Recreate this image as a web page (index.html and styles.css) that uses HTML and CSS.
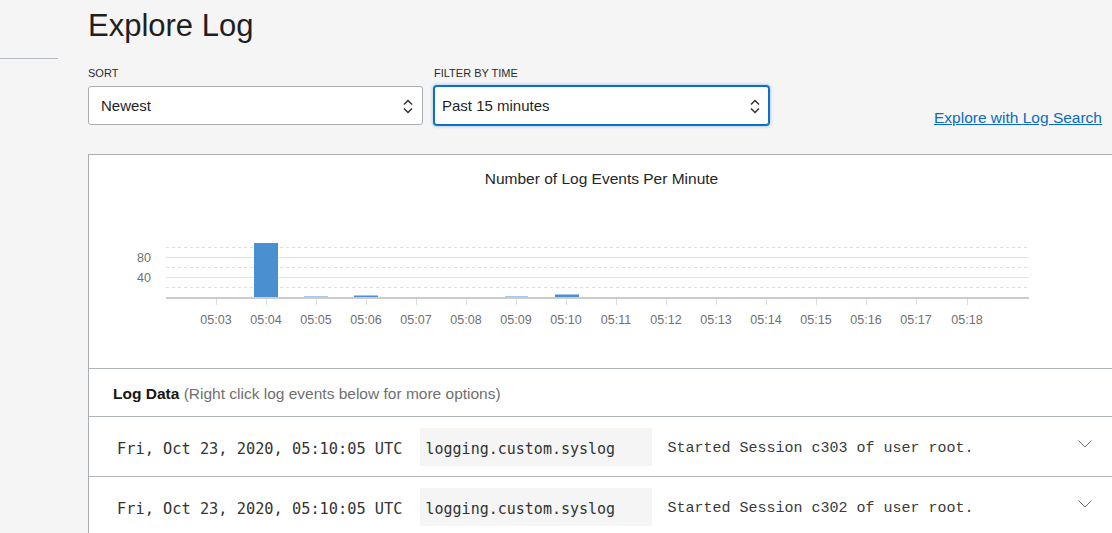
FILE: index.html
```html
<!DOCTYPE html>
<html lang="en">
<head>
<meta charset="utf-8">
<title>Explore Log</title>
<link rel="stylesheet" href="styles.css">
</head>
<body>
<div class="layout">
  <aside class="sidebar"><div class="sidebar-top"></div></aside>
  <main class="content">
    <h1 class="title">Explore Log</h1>
    <div class="controls">
      <div class="field">
        <label class="field-label">SORT</label>
        <div class="select">
          <span>Newest</span>
          <svg class="select-icon" width="10" height="16" viewBox="0 0 10 16"><path d="M1 6.5 L5 2.5 L9 6.5 M1 10.5 L5 14.5 L9 10.5" fill="none" stroke="#333" stroke-width="1.5"/></svg>
        </div>
      </div>
      <div class="field">
        <label class="field-label">FILTER BY TIME</label>
        <div class="select select-focused">
          <span>Past 15 minutes</span>
          <svg class="select-icon" width="10" height="16" viewBox="0 0 10 16"><path d="M1 6.5 L5 2.5 L9 6.5 M1 10.5 L5 14.5 L9 10.5" fill="none" stroke="#333" stroke-width="1.5"/></svg>
        </div>
      </div>
      <a class="search-link" href="#">Explore with Log Search</a>
    </div>
    <section class="panel">
      <div class="chart">
        <div class="chart-title">Number of Log Events Per Minute</div>
        <svg class="chart-svg" width="1025" height="181" viewBox="89 187 1025 181">
          <g class="grid-dashed" stroke="#dedede" stroke-width="1" stroke-dasharray="3 3">
            <line x1="166" y1="247.5" x2="1029" y2="247.5"/>
            <line x1="166" y1="267.5" x2="1029" y2="267.5"/>
            <line x1="166" y1="287.5" x2="1029" y2="287.5"/>
          </g>
          <g stroke="#e3e3e3" stroke-width="1">
            <line x1="166" y1="257.5" x2="1029" y2="257.5"/>
            <line x1="166" y1="277.5" x2="1029" y2="277.5"/>
          </g>
          <g stroke="#dcdcdc" stroke-width="1">
            <line x1="216.5" y1="299" x2="216.5" y2="305"/>
            <line x1="266.5" y1="299" x2="266.5" y2="305"/>
            <line x1="316.5" y1="299" x2="316.5" y2="305"/>
            <line x1="366.5" y1="299" x2="366.5" y2="305"/>
            <line x1="416.5" y1="299" x2="416.5" y2="305"/>
            <line x1="466.5" y1="299" x2="466.5" y2="305"/>
            <line x1="516.5" y1="299" x2="516.5" y2="305"/>
            <line x1="566.5" y1="299" x2="566.5" y2="305"/>
            <line x1="616.5" y1="299" x2="616.5" y2="305"/>
            <line x1="666.5" y1="299" x2="666.5" y2="305"/>
            <line x1="716.5" y1="299" x2="716.5" y2="305"/>
            <line x1="766.5" y1="299" x2="766.5" y2="305"/>
            <line x1="816.5" y1="299" x2="816.5" y2="305"/>
            <line x1="866.5" y1="299" x2="866.5" y2="305"/>
            <line x1="916.5" y1="299" x2="916.5" y2="305"/>
            <line x1="967.5" y1="299" x2="967.5" y2="305"/>
          </g>
          <g fill="#4a8fd0">
            <rect x="254" y="243" width="24" height="54"/>
            <rect x="304" y="296" width="24" height="1" fill="#a9c8ea"/>
            <rect x="354" y="295.5" width="24" height="1.5"/>
            <rect x="505" y="296" width="23" height="1" fill="#a9c8ea"/>
            <rect x="555" y="294.5" width="24" height="2.5"/>
          </g>
          <line x1="166" y1="298" x2="1029" y2="298" stroke="#cccccc" stroke-width="2"/>
          <g class="axis-y" text-anchor="end">
            <text x="151" y="261.7">80</text>
            <text x="151" y="282">40</text>
          </g>
          <g class="axis-x" text-anchor="middle">
            <text x="216" y="324">05:03</text>
            <text x="266" y="324">05:04</text>
            <text x="316" y="324">05:05</text>
            <text x="366" y="324">05:06</text>
            <text x="416" y="324">05:07</text>
            <text x="466" y="324">05:08</text>
            <text x="516" y="324">05:09</text>
            <text x="566" y="324">05:10</text>
            <text x="616" y="324">05:11</text>
            <text x="666" y="324">05:12</text>
            <text x="716" y="324">05:13</text>
            <text x="766" y="324">05:14</text>
            <text x="816" y="324">05:15</text>
            <text x="866" y="324">05:16</text>
            <text x="916" y="324">05:17</text>
            <text x="967" y="324">05:18</text>
          </g>
        </svg>
      </div>
      <div class="log-header"><strong class="log-header-title">Log Data</strong> <span class="log-header-hint">(Right click log events below for more options)</span></div>
      <div class="log-row">
        <span class="log-time">Fri, Oct 23, 2020, 05:10:05 UTC</span>
        <span class="log-source">logging.custom.syslog</span>
        <span class="log-message">Started Session c303 of user root.</span>
        <svg class="log-expand" width="14" height="8" viewBox="0 0 14 8"><path d="M0.5 0.5 L7 7 L13.5 0.5" fill="none" stroke="#6f6f6f" stroke-width="1"/></svg>
      </div>
      <div class="log-row">
        <span class="log-time">Fri, Oct 23, 2020, 05:10:05 UTC</span>
        <span class="log-source">logging.custom.syslog</span>
        <span class="log-message">Started Session c302 of user root.</span>
        <svg class="log-expand" width="14" height="8" viewBox="0 0 14 8"><path d="M0.5 0.5 L7 7 L13.5 0.5" fill="none" stroke="#6f6f6f" stroke-width="1"/></svg>
      </div>
    </section>
  </main>
</div>
</body>
</html>
```

FILE: styles.css
```css
* { box-sizing: border-box; }

html, body {
  margin: 0;
  padding: 0;
  background: #f5f5f5;
  overflow: hidden;
}

body {
  font-family: "Liberation Sans", Arial, sans-serif;
  color: #161513;
}

.layout {
  display: flex;
  align-items: flex-start;
}

.sidebar {
  width: 58px;
  flex: none;
}

.sidebar-top {
  height: 59px;
  border-bottom: 1px solid #b3bac3;
}

.content {
  flex: 1;
  margin-left: 30px;
  padding-right: 10px;
  min-width: 0;
}

.title {
  margin: 0;
  padding-top: 9px;
  font-size: 31px;
  line-height: 34px;
  font-weight: normal;
  color: #1f1f1f;
}

.controls {
  display: flex;
  align-items: flex-end;
  gap: 11px;
  margin-top: 24px;
}

.field {
  display: flex;
  flex-direction: column;
  width: 335px;
}

.field-label {
  font-size: 11px;
  line-height: 13px;
  color: #2b2b2b;
  margin-bottom: 6px;
}

.select {
  display: flex;
  align-items: center;
  justify-content: space-between;
  height: 39px;
  padding: 0 9px 0 12px;
  background: #fff;
  border: 1px solid #a9aeb3;
  border-radius: 3px;
  font-size: 15px;
  color: #1f1f1f;
}

.select-focused {
  border-color: #0f6fc6;
  box-shadow: 0 0 0 1px #0f6fc6, 0 0 3px 2px rgba(15, 111, 198, 0.25);
  padding-left: 7px;
  padding-right: 8px;
}

.select-icon { display: block; }

.search-link {
  margin-left: auto;
  margin-bottom: -1px;
  font-size: 15.5px;
  line-height: 17px;
  color: #0a6cc4;
  text-decoration: underline;
}

.panel {
  margin-top: 29px;
  margin-right: -12px;
  background: #fff;
  border-top: 1px solid #a9aeb3;
  border-left: 1px solid #a9aeb3;
}

.chart-title {
  padding-top: 15px;
  font-size: 15.5px;
  line-height: 17px;
  text-align: center;
  color: #262626;
}

.chart-svg {
  display: block;
}

.axis-y text, .axis-x text {
  font-family: "Liberation Sans", Arial, sans-serif;
  font-size: 12.5px;
  fill: #707070;
}

.log-header {
  border-top: 1px solid #b0b5ba;
  padding: 16px 0 14px 24px;
  font-size: 15.5px;
  line-height: 17px;
}

.log-header-title {
  font-weight: bold;
  color: #161513;
}

.log-header-hint {
  color: #6f6f6f;
}

.log-row {
  display: flex;
  align-items: center;
  height: 60px;
  border-top: 1px solid #b0b5ba;
  padding: 0 22px 0 28px;
  color: #333;
}

.log-time {
  font-family: "DejaVu Sans Mono", monospace;
  font-size: 15.3px;
  padding-top: 4px;
  white-space: nowrap;
}

.log-source {
  margin-left: 17px;
  width: 232px;
  height: 38px;
  display: flex;
  align-items: center;
  padding-left: 6px;
  padding-top: 4px;
  background: #f5f5f5;
  font-family: "DejaVu Sans Mono", monospace;
  font-size: 15px;
  white-space: nowrap;
}

.log-message {
  margin-left: 16px;
  padding-top: 4px;
  font-family: "Liberation Mono", "Courier New", monospace;
  font-size: 15px;
  color: #3a3a3a;
  white-space: nowrap;
}

.log-expand {
  margin-left: auto;
  align-self: flex-start;
  margin-top: 23px;
  display: block;
}
```
